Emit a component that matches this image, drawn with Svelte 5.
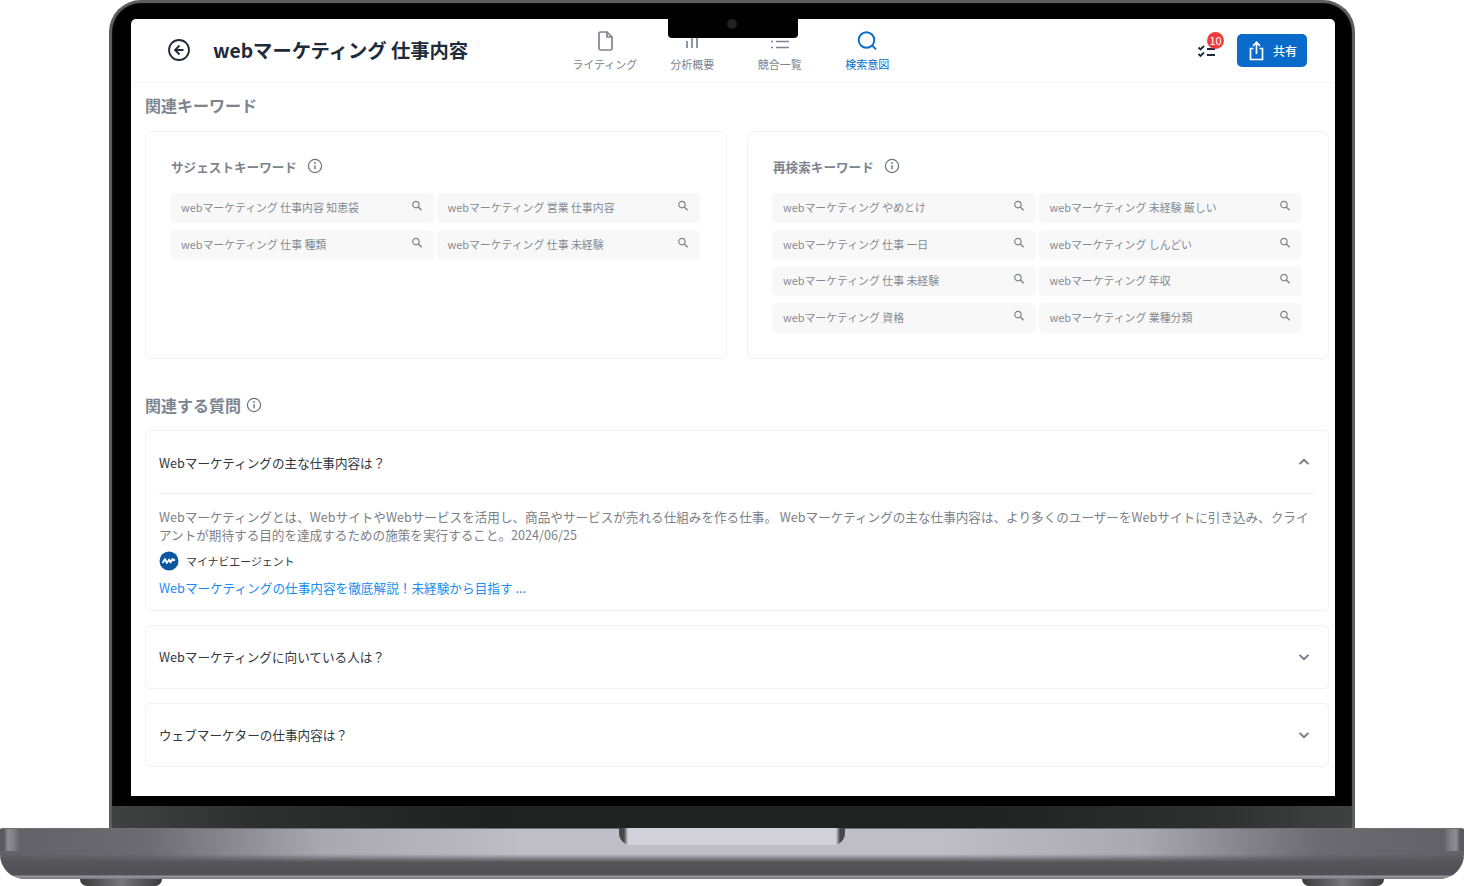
<script lang="ts">
  const suggest = [
    "webマーケティング 仕事内容 知恵袋",
    "webマーケティング 営業 仕事内容",
    "webマーケティング 仕事 種類",
    "webマーケティング 仕事 未経験",
  ];
  const research = [
    "webマーケティング やめとけ",
    "webマーケティング 未経験 厳しい",
    "webマーケティング 仕事 一日",
    "webマーケティング しんどい",
    "webマーケティング 仕事 未経験",
    "webマーケティング 年収",
    "webマーケティング 資格",
    "webマーケティング 業種分類",
  ];
</script>

{#snippet info(size = 16)}
  <svg class="info" width={size} height={size} viewBox="0 0 16 16" fill="none" stroke="currentColor" stroke-width="1.2">
    <circle cx="8" cy="8" r="6.6" />
    <path d="M8 7.2v4" stroke-width="1.4" />
    <circle cx="8" cy="4.9" r="0.9" fill="currentColor" stroke="none" />
  </svg>
{/snippet}

{#snippet chevron(up = false)}
  <svg class="chev" width="12" height="8" viewBox="0 0 12 8" fill="none" stroke="currentColor" stroke-width="1.8">
    <path d={up ? "M1.5 6.2 6 1.8l4.5 4.4" : "M1.5 1.8 6 6.2l4.5-4.4"} />
  </svg>
{/snippet}

{#snippet chips(items: string[])}
  <div class="chips">
    {#each items as it}
      <div class="chip">
        <span>{it}</span>
        <svg width="12" height="12" viewBox="0 0 12 12" fill="none" stroke="currentColor" stroke-width="1.2">
          <circle cx="4.9" cy="4.6" r="3.2" />
          <path d="m7.3 7 3.3 3.3" stroke-width="1.5" />
        </svg>
      </div>
    {/each}
  </div>
{/snippet}

<div class="device">
  <div class="lid">
    <div class="screen">
      <div class="notch"><i></i></div>
      <header>
        <div class="head-left">
          <svg width="24" height="24" viewBox="0 0 24 24" fill="none" stroke="#1d2b3a" stroke-width="1.8">
            <circle cx="12" cy="12" r="10" />
            <path d="M12.5 7.5 8 12l4.5 4.5M8 12h8.5" />
          </svg>
          <h1>webマーケティング 仕事内容</h1>
        </div>
        <nav>
          <div class="nav-item">
            <svg width="24" height="24" viewBox="0 0 24 24" fill="none" stroke="currentColor" stroke-width="1.7">
              <path d="M14 3H7.5A1.5 1.5 0 0 0 6 4.5v15A1.5 1.5 0 0 0 7.5 21h10a1.5 1.5 0 0 0 1.5-1.5V8z" stroke-linejoin="round" />
              <path d="M14 3v5h5" stroke-linejoin="round" />
            </svg>
            <span>ライティング</span>
          </div>
          <div class="nav-item">
            <svg width="24" height="24" viewBox="0 0 24 24" fill="none" stroke="currentColor" stroke-width="1.7">
              <path d="M7 19v-7M12 19V5M17 19V9" />
            </svg>
            <span>分析概要</span>
          </div>
          <div class="nav-item">
            <svg width="24" height="24" viewBox="0 0 24 24" fill="none" stroke="currentColor" stroke-width="1.7">
              <path d="M8 6.5h13M8 12.5h13M8 18.5h13M3 6.5h2M3 12.5h2M3 18.5h2" />
            </svg>
            <span>競合一覧</span>
          </div>
          <div class="nav-item active">
            <svg width="24" height="24" viewBox="0 0 24 24" fill="none" stroke="currentColor" stroke-width="1.9">
              <circle cx="11.5" cy="11" r="7.8" />
              <path d="m17.2 16.5 3.8 3.8" />
            </svg>
            <span>検索意図</span>
          </div>
        </nav>
        <div class="actions">
          <div class="todo">
            <svg width="20" height="20" viewBox="0 0 20 20" fill="none" stroke="#1d2b3a" stroke-width="1.8">
              <path d="m1.5 6.5 2 2L7 5M1.5 13l2 2L7 11.5M10 8h8M10 14h8" />
            </svg>
            <b>10</b>
          </div>
          <button class="share">
            <svg width="18" height="20" viewBox="0 0 18 20" fill="none" stroke="#fff" stroke-width="1.7">
              <path d="M5.5 7.5h-3v11h12v-11h-3M8.500 13V1.500M5 4.800l3.500-3.500L12 4.800" />
            </svg>
            <span>共有</span>
          </button>
        </div>
      </header>

      <main>
        <h2 class="first">関連キーワード</h2>
        <div class="cards">
          <section class="card">
            <h3>サジェストキーワード {@render info()}</h3>
            {@render chips(suggest)}
          </section>
          <section class="card">
            <h3>再検索キーワード {@render info()}</h3>
            {@render chips(research)}
          </section>
        </div>

        <h2 class="second">関連する質問 {@render info()}</h2>

        <div class="qa open">
          <div class="q"><span>Webマーケティングの主な仕事内容は？</span>{@render chevron(true)}</div>
          <div class="a">
            <p>Webマーケティングとは、WebサイトやWebサービスを活用し、商品やサービスが売れる仕組みを作る仕事。 Webマーケティングの主な仕事内容は、より多くのユーザーをWebサイトに引き込み、クライアントが期待する目的を達成するための施策を実行すること。2024/06/25</p>
            <div class="source">
              <svg width="20" height="20" viewBox="0 0 20 20">
                <circle cx="10" cy="10" r="9.5" fill="#0a569f" />
                <path d="m3.5 12 2.5-4 1.800 4 2.400-3.500 1.300 3 2-3.500 2.500 1.500" fill="none" stroke="#fff" stroke-width="1.8" stroke-linejoin="round" />
              </svg>
              <span>マイナビエージェント</span>
            </div>
            <div class="link">Webマーケティングの仕事内容を徹底解説！未経験から目指す ...</div>
          </div>
        </div>
        <div class="qa">
          <div class="q"><span>Webマーケティングに向いている人は？</span>{@render chevron()}</div>
        </div>
        <div class="qa">
          <div class="q"><span>ウェブマーケターの仕事内容は？</span>{@render chevron()}</div>
        </div>
      </main>
    </div>
    <div class="hinge"></div>
  </div>

  <div class="base">
    <div class="thumb"></div>
  </div>
  <div class="feet"><i></i><i></i></div>
</div>

<style>
  :global(body) {
    margin: 0;
    background: #fff;
  }
  .device {
    position: relative;
    width: 1464px;
    height: 886px;
    overflow: hidden;
    font-family: "Noto Sans CJK JP", "Noto Sans", sans-serif;
  }
  .lid {
    box-sizing: border-box;
    margin: 0 109px;
    width: 1246px;
    height: 828px;
    padding: 16px 17px 0 19px;
    background: #000;
    border: 3px solid #5e5e5e;
    border-bottom: 0;
    border-radius: 32px 32px 0 0;
    box-shadow: inset 0 0 3px #222;
  }
  .screen {
    position: relative;
    width: 1204px;
    height: 777px;
    background: #fff;
    border-radius: 5px 5px 0 0;
    overflow: hidden;
  }
  .hinge {
    height: 22px;
    margin: 10px -17px 0 -19px;
    background: linear-gradient(90deg, #3e4241 0%, #2c2f2e 12%, #1f2221 30%, #202322 70%, #2c2f2e 88%, #3e4241 100%);
  }
  .notch {
    position: absolute;
    left: 537px;
    top: 0;
    z-index: 2;
    width: 130px;
    height: 19px;
    background: #000;
    border-radius: 0 0 4px 4px;
  }
  .notch i {
    position: absolute;
    left: 59px;
    top: 0;
    width: 10px;
    height: 10px;
    border-radius: 50%;
    background: #222;
  }
  header {
    display: flex;
    align-items: flex-start;
    height: 63px;
    border-bottom: 1px solid #f6f6f7;
  }
  .head-left {
    display: flex;
    align-items: center;
    gap: 22px;
    width: 430px;
    height: 62px;
    padding-left: 36px;
    box-sizing: border-box;
  }
  h1 {
    margin: 0;
    font-size: 19.3px;
    font-weight: 700;
    color: #1d2b3a;
    white-space: nowrap;
  }
  nav {
    display: flex;
    padding-top: 10px;
  }
  .nav-item {
    display: flex;
    flex-direction: column;
    align-items: center;
    gap: 3px;
    width: 87.5px;
    color: #7b8590;
    font-size: 11px;
    line-height: 16px;
  }
  .nav-item.active {
    color: #0b6bcb;
  }
  .actions {
    display: flex;
    align-items: center;
    gap: 20px;
    margin-left: auto;
    margin-right: 28px;
    height: 62px;
  }
  .todo {
    position: relative;
    display: flex;
    margin-top: 1px;
  }
  .todo b {
    position: absolute;
    left: 10px;
    top: -9px;
    width: 17px;
    height: 17px;
    border-radius: 50%;
    background: #f23c3c;
    color: #fff;
    font-size: 11px;
    font-weight: 400;
    line-height: 17px;
    text-align: center;
  }
  .share {
    display: flex;
    align-items: center;
    gap: 7px;
    width: 70px;
    height: 33px;
    margin-top: 1px;
    padding: 0 0 0 11px;
    border: 0;
    border-radius: 5px;
    background: #0b6bcb;
    color: #fff;
    font-family: inherit;
    font-size: 12px;
    font-weight: 500;
  }
  main {
    padding: 0 6px 0 14px;
  }
  h2 {
    display: flex;
    align-items: center;
    gap: 5px;
    margin: 0;
    font-size: 16px;
    font-weight: 700;
    line-height: 24px;
    color: #7c858e;
  }
  h2.first {
    box-sizing: border-box;
    align-items: flex-start;
    padding-top: 10px;
    height: 48px;
  }
  h2.second {
    margin-top: 34px;
    margin-bottom: 13px;
  }
  .cards {
    display: grid;
    grid-template-columns: 582px 582px;
    gap: 20px;
  }
  .card {
    box-sizing: border-box;
    height: 228px;
    padding: 23px 24px 0;
    border: 1px solid #f0f1f2;
    border-radius: 8px;
  }
  h3 {
    display: flex;
    align-items: center;
    gap: 10px;
    margin: 0 0 16px;
    padding-left: 1px;
    height: 22px;
    font-size: 12.6px;
    font-weight: 700;
    color: #7c858e;
  }
  .info {
    color: #6b747d;
    flex: none;
  }
  .chips {
    display: grid;
    grid-template-columns: 263.5px 263.5px;
    gap: 6.5px 3px;
  }
  .chip {
    display: flex;
    align-items: center;
    justify-content: space-between;
    height: 30px;
    padding: 0 11px 2px;
    box-sizing: border-box;
    background: #f8f8f9;
    border-radius: 5px;
    font-size: 10.9px;
    color: #848b93;
  }
  .chip svg {
    color: #7c858e;
    margin-top: -2px;
  }
  .qa {
    box-sizing: border-box;
    margin-bottom: 14px;
    padding: 0 13px;
    border: 1px solid #f0f1f2;
    border-radius: 5px;
    min-height: 64px;
  }
  .q {
    display: flex;
    align-items: center;
    justify-content: space-between;
    height: 61px;
    padding-right: 5px;
    font-size: 12.6px;
    color: #2f3842;
  }
  .qa.open .q {
    border-bottom: 1px solid #eeeff0;
    box-sizing: border-box;
    height: 63px;
  }
  .chev {
    color: #6f7983;
    flex: none;
  }
  .a {
    padding-top: 14px;
    height: 116px;
    box-sizing: border-box;
  }
  .a p {
    margin: 0;
    font-size: 12.6px;
    line-height: 18px;
    color: #7c8187;
  }
  .source {
    display: flex;
    align-items: center;
    gap: 7px;
    height: 20px;
    margin-top: 7px;
    font-size: 10.9px;
    color: #2f3842;
  }
  .link {
    margin-top: 7px;
    font-size: 12.65px;
    line-height: 20px;
    color: #1a8cf0;
  }
  .base {
    position: relative;
    height: 51px;
    border-radius: 2px 2px 25px 25px;
    background:
      linear-gradient(90deg, #5a595e 0, #5a595e 4px, #8f8e95 8px, #7f7e84 14px, rgba(90, 89, 94, 0) 20px, rgba(90, 89, 94, 0) calc(100% - 20px), #7f7e84 calc(100% - 14px), #8f8e95 calc(100% - 8px), #5a595e calc(100% - 4px), #5a595e 100%) top / 100% 22px no-repeat,
      linear-gradient(180deg, rgba(0, 0, 0, 0) 0, rgba(0, 0, 0, 0) 25px, #55555a 33px, #515155 46px, #9a99a0 47px, #78777c 50px),
      linear-gradient(90deg, #616065 0%, #6c6b71 10%, #a9a7b0 22%, #bfbdc6 36%, #bfbdc6 64%, #a9a7b0 78%, #6c6b71 90%, #616065 100%);
    border-top: 1px solid #6f6f72;
    box-sizing: border-box;
  }
  .thumb {
    position: absolute;
    left: 619px;
    top: -1px;
    width: 226px;
    height: 17px;
    box-sizing: border-box;
    background: linear-gradient(90deg, #47474b 0, #47474b 5px, #d2d0d9 9px, #d2d0d9 calc(100% - 9px), #47474b calc(100% - 5px), #47474b 100%);
    border-radius: 0 0 12px 12px;
  }
  .feet {
    display: flex;
    justify-content: space-between;
    padding: 0 80px;
  }
  .feet i {
    display: block;
    width: 82px;
    height: 7px;
    border-radius: 0 0 12px 12px;
    background: linear-gradient(90deg, #3a3a3c, #77767b 50%, #3a3a3c);
  }
</style>
